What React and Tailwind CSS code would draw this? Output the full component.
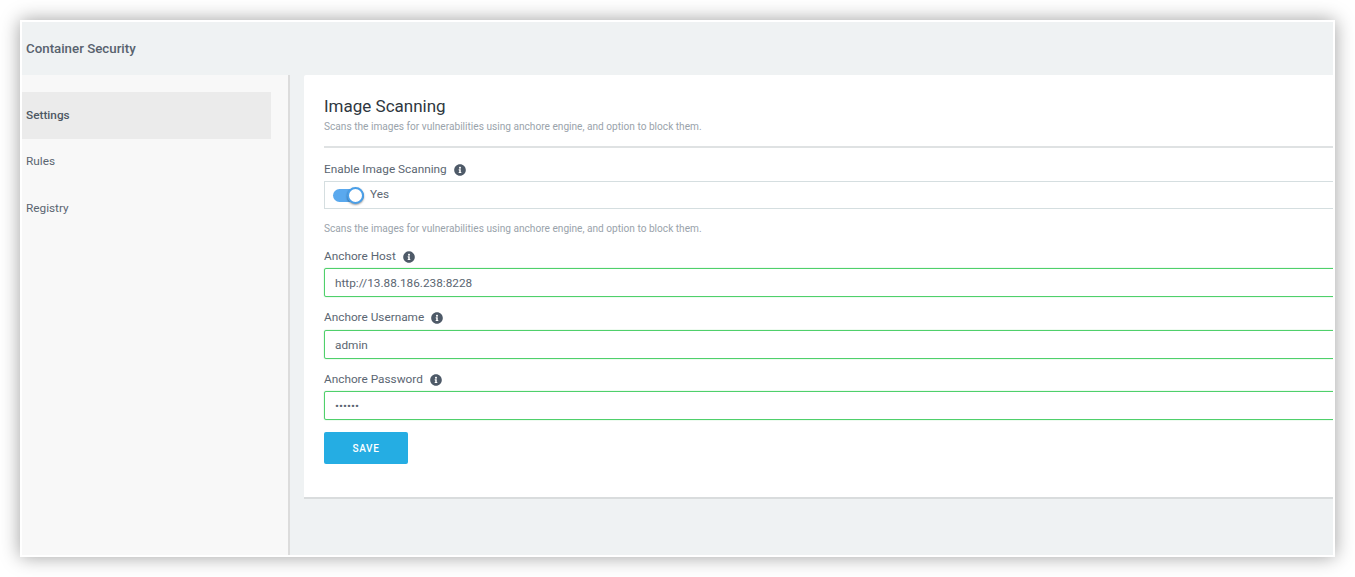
function InfoDot() {
  return (
    <svg viewBox="0 0 512 512" className="w-[12px] h-[12px] fill-[#4e5a68]">
      <path d="M256 8C119 8 8 119 8 256s111 248 248 248 248-111 248-248S393 8 256 8zm0 110c23 0 42 19 42 42s-19 42-42 42-42-19-42-42 19-42 42-42zm56 254c0 7-5 12-12 12h-88c-7 0-12-5-12-12v-24c0-7 5-12 12-12h12v-64h-12c-7 0-12-5-12-12v-24c0-7 5-12 12-12h64c7 0 12 5 12 12v100h12c7 0 12 5 12 12v24z" />
    </svg>
  );
}

function FieldLabel({ text }) {
  return (
    <div className="flex items-center gap-[7px] h-[16px] text-[11.8px] text-[#5b6672]">
      <span>{text}</span>
      <InfoDot />
    </div>
  );
}

function GreenInput({ value, type = "text", className = "mt-[4px]" }) {
  return (
    <input
      readOnly
      type={type}
      value={value}
      className={`block w-full h-[29px] px-[10px] border border-[#4fd06b] rounded-[2px] shadow-[0_0_1px_#4fd06b] text-[11.8px] text-[#5b6672] outline-none ${className}`}
    />
  );
}

export default function App() {
  return (
    <div className="w-[1355px] h-[577px] bg-white pt-[20px] pl-[20px] overflow-hidden font-['Roboto',sans-serif]">
      <div className="w-[1315px] h-[537px] border-2 border-white flex flex-col bg-[#eff2f3] shadow-[0_0_18px_rgba(0,0,0,0.38)]">
        {/* HEADER */}
        <div className="h-[53px] shrink-0 flex items-center pl-[4px] pt-[1px] text-[13.3px] font-medium text-[#58626e]">
          Container Security
        </div>

        <div className="flex flex-1 min-h-0">
          {/* SIDEBAR */}
          <div className="w-[268px] shrink-0 bg-[#f8f8f8] border-r-2 border-[#dcdcdc] pt-[17px] text-[11.8px] text-[#5b6672]">
            <div className="w-[249px] h-[47px] bg-[#ebebeb] flex items-center pl-[4px] font-medium text-[#4e5863]">
              Settings
            </div>
            <div className="w-[249px] h-[46px] flex items-center pl-[4px]">Rules</div>
            <div className="w-[249px] h-[47px] flex items-center pl-[4px]">Registry</div>
          </div>

          {/* CONTENT */}
          <div className="flex-1 min-w-0 pl-[14px]">
            <div className="h-[424px] bg-white overflow-hidden rounded-tl-[2px] border-b-2 border-[#d9dcdd] pl-[20px] pt-[20px]">
              <div className="-mr-[4px]">
                <h1 className="text-[17px] leading-[22px] text-[#2f3740]">Image Scanning</h1>
                <p className="text-[10.13px] leading-[14px] mt-[3px] text-[#9aa3ab]">
                  Scans the images for vulnerabilities using anchore engine, and option to block them.
                </p>
                <div className="h-[2px] bg-[#dfe2e3] mt-[12px]" />

                <div className="mt-[14px]">
                  <FieldLabel text="Enable Image Scanning" />
                </div>
                <div className="h-[28px] mt-[3px] border border-[#d5dee0] flex items-center pl-[8px] gap-[6px]">
                  <div className="relative w-[31px] h-[13px] rounded-full bg-[#5aa9ee]">
                    <div className="absolute right-0 top-[-2px] w-[17px] h-[17px] rounded-full bg-white border-2 border-[#4a9fe8] shadow-[0_1px_2px_rgba(0,0,0,0.4)]" />
                  </div>
                  <span className="text-[11.8px] text-[#5b6672]">Yes</span>
                </div>
                <p className="text-[10.13px] leading-[14px] mt-[13px] text-[#9aa3ab]">
                  Scans the images for vulnerabilities using anchore engine, and option to block them.
                </p>

                <div className="mt-[13px]">
                  <FieldLabel text="Anchore Host" />
                  <GreenInput value="http://13.88.186.238:8228" className="mt-[3px]" />
                </div>
                <div className="mt-[13px]">
                  <FieldLabel text="Anchore Username" />
                  <GreenInput value="admin" className="mt-[4px]" />
                </div>
                <div className="mt-[13px]">
                  <FieldLabel text="Anchore Password" />
                  <GreenInput value="secret" type="password" className="mt-[3px]" />
                </div>

                <button className="block w-[84px] h-[32px] mt-[12px] bg-[#25ade3] rounded-[2px] text-[10px] font-medium tracking-[0.6px] text-white">
                  SAVE
                </button>
              </div>
            </div>
          </div>
        </div>
      </div>
    </div>
  );
}
